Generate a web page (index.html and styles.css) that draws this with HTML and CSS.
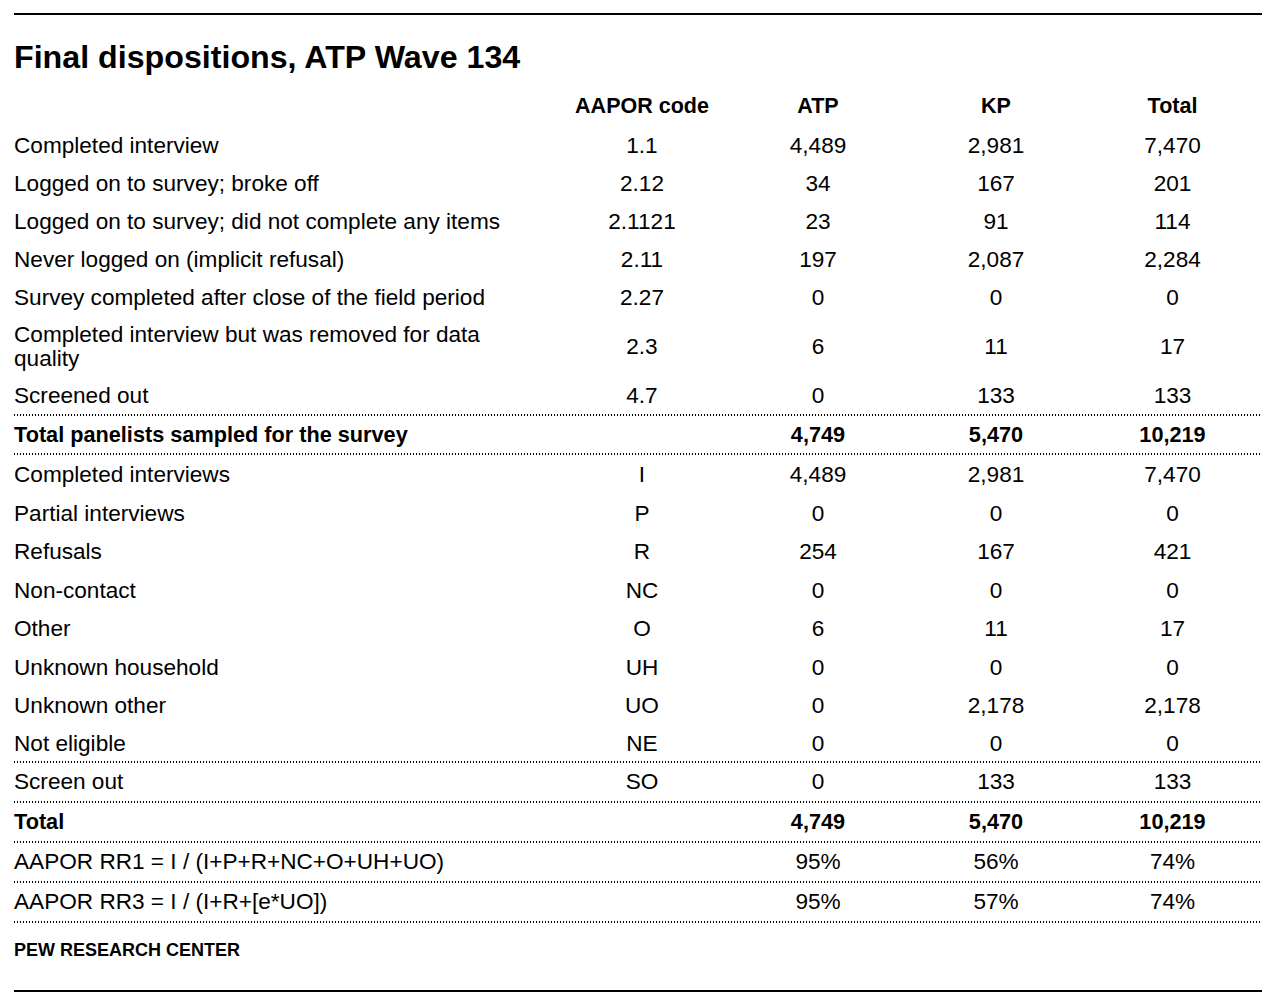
FILE: index.html
```html
<!DOCTYPE html>
<html lang="en">
<head>
<meta charset="utf-8">
<title>Final dispositions, ATP Wave 134</title>
<link rel="stylesheet" href="styles.css">
</head>
<body>
<div class="chart">
  <h1 class="title">Final dispositions, ATP Wave 134</h1>
  <div class="table">
    <div class="row head">
      <div class="label"></div>
      <div class="cell">AAPOR code</div>
      <div class="cell">ATP</div>
      <div class="cell">KP</div>
      <div class="cell">Total</div>
    </div>
    <div class="row r38">
      <div class="label">Completed interview</div>
      <div class="cell">1.1</div><div class="cell">4,489</div><div class="cell">2,981</div><div class="cell">7,470</div>
    </div>
    <div class="row r38">
      <div class="label">Logged on to survey; broke off</div>
      <div class="cell">2.12</div><div class="cell">34</div><div class="cell">167</div><div class="cell">201</div>
    </div>
    <div class="row r38">
      <div class="label">Logged on to survey; did not complete any items</div>
      <div class="cell">2.1121</div><div class="cell">23</div><div class="cell">91</div><div class="cell">114</div>
    </div>
    <div class="row r38">
      <div class="label">Never logged on (implicit refusal)</div>
      <div class="cell">2.11</div><div class="cell">197</div><div class="cell">2,087</div><div class="cell">2,284</div>
    </div>
    <div class="row r38">
      <div class="label">Survey completed after close of the field period</div>
      <div class="cell">2.27</div><div class="cell">0</div><div class="cell">0</div><div class="cell">0</div>
    </div>
    <div class="row r60">
      <div class="label wrap">Completed interview but was removed for data quality</div>
      <div class="cell">2.3</div><div class="cell">6</div><div class="cell">11</div><div class="cell">17</div>
    </div>
    <div class="row r39 sep">
      <div class="label">Screened out</div>
      <div class="cell">4.7</div><div class="cell">0</div><div class="cell">133</div><div class="cell">133</div>
    </div>
    <div class="row r39 sep bold">
      <div class="label">Total panelists sampled for the survey</div>
      <div class="cell"></div><div class="cell">4,749</div><div class="cell">5,470</div><div class="cell">10,219</div>
    </div>
    <div class="row r385">
      <div class="label">Completed interviews</div>
      <div class="cell">I</div><div class="cell">4,489</div><div class="cell">2,981</div><div class="cell">7,470</div>
    </div>
    <div class="row r385">
      <div class="label">Partial interviews</div>
      <div class="cell">P</div><div class="cell">0</div><div class="cell">0</div><div class="cell">0</div>
    </div>
    <div class="row r385">
      <div class="label">Refusals</div>
      <div class="cell">R</div><div class="cell">254</div><div class="cell">167</div><div class="cell">421</div>
    </div>
    <div class="row r385">
      <div class="label">Non-contact</div>
      <div class="cell">NC</div><div class="cell">0</div><div class="cell">0</div><div class="cell">0</div>
    </div>
    <div class="row r385">
      <div class="label">Other</div>
      <div class="cell">O</div><div class="cell">6</div><div class="cell">11</div><div class="cell">17</div>
    </div>
    <div class="row r385">
      <div class="label">Unknown household</div>
      <div class="cell">UH</div><div class="cell">0</div><div class="cell">0</div><div class="cell">0</div>
    </div>
    <div class="row r385">
      <div class="label">Unknown other</div>
      <div class="cell">UO</div><div class="cell">0</div><div class="cell">2,178</div><div class="cell">2,178</div>
    </div>
    <div class="row r385 sep">
      <div class="label">Not eligible</div>
      <div class="cell">NE</div><div class="cell">0</div><div class="cell">0</div><div class="cell">0</div>
    </div>
    <div class="row r40 sep">
      <div class="label">Screen out</div>
      <div class="cell">SO</div><div class="cell">0</div><div class="cell">133</div><div class="cell">133</div>
    </div>
    <div class="row r40 sep bold">
      <div class="label">Total</div>
      <div class="cell"></div><div class="cell">4,749</div><div class="cell">5,470</div><div class="cell">10,219</div>
    </div>
    <div class="row r40 sep">
      <div class="label">AAPOR RR1 = I / (I+P+R+NC+O+UH+UO)</div>
      <div class="cell"></div><div class="cell">95%</div><div class="cell">56%</div><div class="cell">74%</div>
    </div>
    <div class="row r40 sep">
      <div class="label">AAPOR RR3 = I / (I+R+[e*UO])</div>
      <div class="cell"></div><div class="cell">95%</div><div class="cell">57%</div><div class="cell">74%</div>
    </div>
  </div>
  <div class="source">PEW RESEARCH CENTER</div>
</div>
</body>
</html>
```

FILE: styles.css
```css
html, body {
  margin: 0;
  padding: 0;
  background: #ffffff;
}

body {
  font-family: "Liberation Sans", Arial, sans-serif;
  color: #000;
}

.chart {
  margin: 0 18px 0 14px;
  padding-top: 13px;
}

.title {
  border-top: 2px solid #000;
  margin: 0;
  padding-top: 24px;
  font-size: 32.2px;
  line-height: 36px;
  font-weight: 700;
}

.table {
  margin-top: 9px;
}

.row {
  display: grid;
  grid-template-columns: 543px 170px 182px 174px 1fr;
  align-items: center;
  box-sizing: border-box;
  font-size: 22.6px;
  line-height: 24px;
}

.row .cell {
  text-align: center;
}

.row .label {
  text-align: left;
}

.row .label.wrap {
  max-width: 500px;
}

.head {
  height: 43px;
  font-weight: 700;
  font-size: 21.5px;
}

.bold {
  font-weight: 700;
  font-size: 21.7px;
}

.r38 { height: 38px; }
.r60 { height: 60px; }
.r39 { height: 39px; }
.r385 { height: 38.5px; padding-top: 2px; }
.r40 { height: 40px; }

.sep {
  padding-bottom: 2px;
  background-image: linear-gradient(to right, #000 50%, rgba(0, 0, 0, 0) 50%);
  background-size: 3px 2px;
  background-position: left bottom;
  background-repeat: repeat-x;
}

.source {
  margin-top: 15px;
  font-size: 18px;
  line-height: 24px;
  font-weight: 700;
  padding-bottom: 28px;
  border-bottom: 2px solid #000;
}
```
